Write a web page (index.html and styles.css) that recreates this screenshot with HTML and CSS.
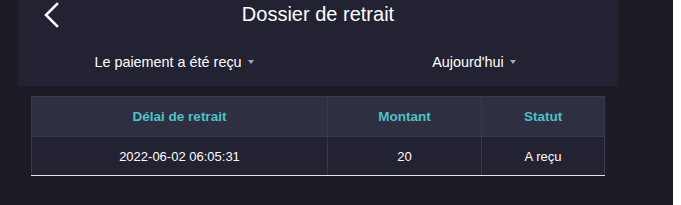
FILE: index.html
```html
<!DOCTYPE html>
<html>
<head>
<meta charset="utf-8">
<link rel="stylesheet" href="styles.css">
</head>
<body>
<div class="page">
  <div class="panel">
    <div class="topbar">
      <div class="back">
        <svg width="16" height="26" viewBox="0 0 16 26"><path d="M14 2 L3 13 L14 24" fill="none" stroke="#ffffff" stroke-width="2.6" stroke-linecap="square"/></svg>
      </div>
      <div class="title">Dossier de retrait</div>
      <div></div>
    </div>
    <div class="filters">
      <div class="filter"><span class="label">Le paiement a été reçu</span></div>
      <div class="filter"><span class="label">Aujourd'hui</span></div>
    </div>
  </div>
  <table class="records">
    <thead>
      <tr><th class="c1">Délai de retrait</th><th class="c2">Montant</th><th class="c3">Statut</th></tr>
    </thead>
    <tbody>
      <tr><td>2022-06-02 06:05:31</td><td>20</td><td>A reçu</td></tr>
    </tbody>
  </table>
</div>
</body>
</html>
```

FILE: styles.css
```css
html, body {
  margin: 0;
  padding: 0;
  background: #ffffff;
}
.page {
  width: 673px;
  height: 205px;
  background: #1c1c27;
  font-family: "Liberation Sans", Arial, sans-serif;
  color: #ffffff;
  overflow: hidden;
}
.panel {
  margin-left: 18px;
  width: 600px;
  height: 86px;
  background: #222233;
}
.topbar {
  display: grid;
  grid-template-columns: 1fr auto 1fr;
  align-items: center;
  height: 30px;
}
.back {
  padding-left: 25px;
  display: flex;
  align-items: center;
  height: 30px;
}
.back svg { display: block; margin-top: 0; }
.title {
  font-size: 20px;
  line-height: 30px;
  margin-top: -2px;
}
.filters {
  display: flex;
  height: 56px;
  align-items: center;
}
.filter {
  flex: 1;
  display: flex;
  justify-content: center;
}
.label {
  position: relative;
  font-size: 14.4px;
  line-height: 18px;
  margin-top: 7px;
}
.label::after {
  content: "";
  position: absolute;
  right: -12px;
  top: 7px;
  border-left: 3.5px solid transparent;
  border-right: 3.5px solid transparent;
  border-top: 4px solid #a8a8b0;
}
.records {
  margin-top: 10px;
  margin-left: 31px;
  width: 574px;
  border-collapse: collapse;
  table-layout: fixed;
}
.records th, .records td {
  text-align: center;
  padding: 0;
  border: 1px solid #383950;
}
.records th {
  height: 39px;
  background: #2e2f42;
  color: #4fc1c6;
  font-weight: bold;
  font-size: 13.5px;
}
.records td {
  height: 38px;
  background: #222233;
  font-size: 13px;
  border-bottom: 1px solid #e0e0e8;
}
.c1 { width: 295px; }
.c2 { width: 153px; }
.c3 { width: 122px; }
```
